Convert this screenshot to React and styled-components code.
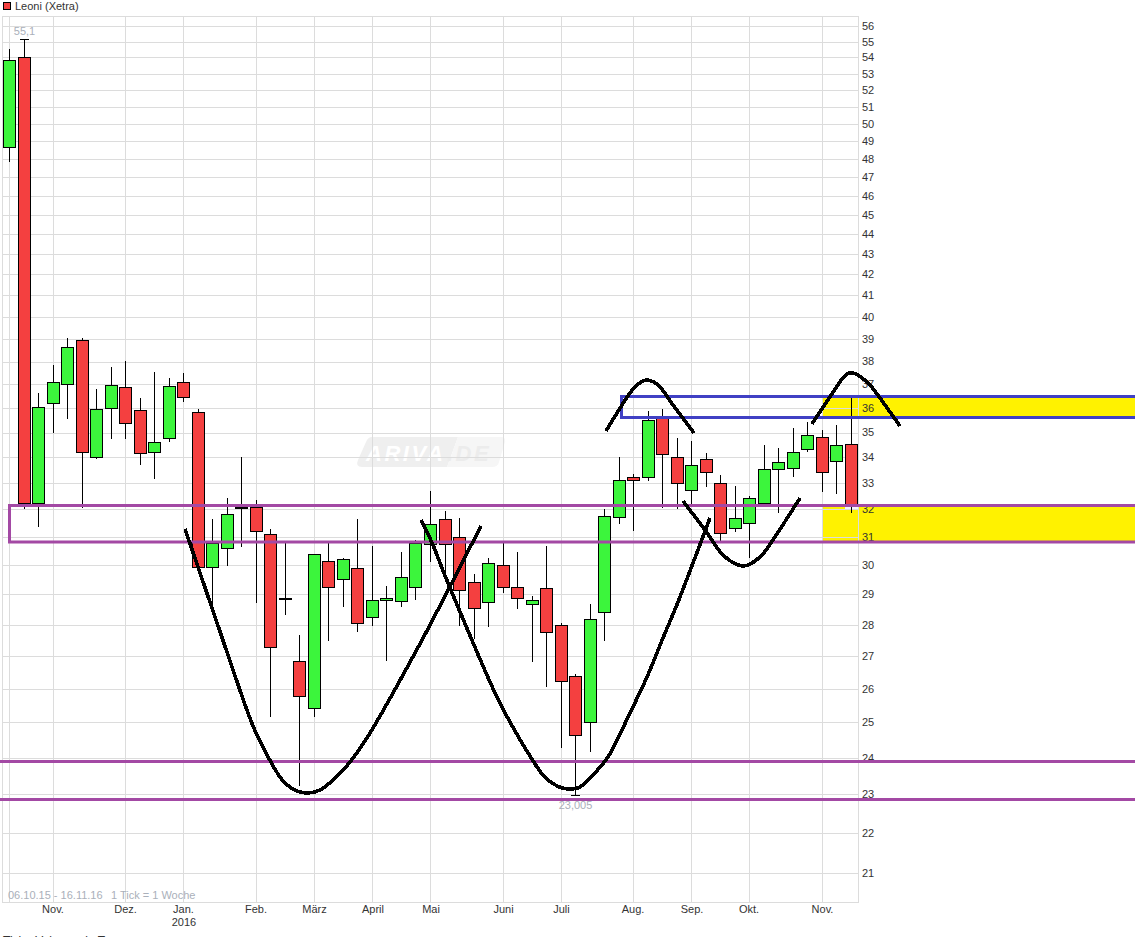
import React from 'react';
import styled, { createGlobalStyle } from 'styled-components';

const GlobalStyle = createGlobalStyle`
  html, body {
    margin: 0;
    padding: 0;
    background: #fff;
    overflow: hidden;
  }
  body {
    font-family: "Liberation Sans", Arial, sans-serif;
  }
`;

const Page = styled.div`
  display: flex;
  flex-direction: column;
  width: 1135px;
  height: 937px;
  overflow: hidden;
  background: #fff;
`;

const Legend = styled.div`
  display: flex;
  align-items: center;
  gap: 4px;
  height: 14px;
  padding: 0 0 2px 3px;
  box-sizing: border-box;
  font-size: 11px;
  color: #333;
`;

const LegendSwatch = styled.span`
  width: 6px;
  height: 6px;
  background: #f44040;
  border: 1px solid #000;
`;

const Chart = styled.svg`
  display: block;
  flex: none;
`;

const Footer = styled.div`
  flex: none;
  padding-left: 3px;
  font-size: 12px;
  line-height: 14px;
  color: #333;
`;

const GridLine = styled.line`
  stroke: #dcdcdc;
  stroke-width: 1;
`;

const Band = styled.rect`
  fill: #fff200;
`;

const AxisLabel = styled.text`
  font-family: "Liberation Sans", Arial, sans-serif;
  font-size: 11px;
  fill: #333;
`;

const Note = styled.text`
  font-family: "Liberation Sans", Arial, sans-serif;
  font-size: 11px;
  fill: #aab0ba;
`;

const Wick = styled.line`
  stroke: #000;
  stroke-width: ${(p) => p.$w || 1};
`;

const CandleBody = styled.rect`
  fill: ${(p) => (p.$up ? '#3cf53c' : '#f44040')};
  stroke: #000;
  stroke-width: 1;
`;

const Frame = styled.path`
  fill: none;
  stroke: ${(p) => p.$color};
  stroke-width: 3;
`;

const Curve = styled.path`
  fill: none;
  stroke: #000;
  stroke-width: 3.6;
  shape-rendering: crispEdges;
`;

const WatermarkText = styled.text`
  font-family: "Liberation Sans", Arial, sans-serif;
  font-size: 22px;
  font-weight: bold;
  font-style: italic;
  letter-spacing: 2.5px;
  fill: ${(p) => p.$fill};
`;

const hLines = [16, 26, 42, 57, 74, 90, 107, 124, 141, 159, 177, 196, 215, 234, 254, 274, 295, 317, 339, 362, 384, 408, 433, 457, 483, 509, 537, 565, 594, 625, 656, 689, 722, 758, 794, 833, 873, 902];
const vLines = [2, 9, 53, 125, 183, 256, 314, 372, 430, 503, 561, 633, 691, 749, 822, 858];

const priceLabels = [
  [56, 26], [55, 42], [54, 57], [53, 74], [52, 90], [51, 107], [50, 124], [49, 141], [48, 159],
  [47, 177], [46, 196], [45, 215], [44, 234], [43, 254], [42, 274], [41, 295], [40, 317], [39, 339],
  [38, 361], [37, 384], [36, 408], [35, 432], [34, 457], [33, 483], [32, 509], [31, 537], [30, 565],
  [29, 594], [28, 625], [27, 656], [26, 689], [25, 722], [24, 758], [23, 794], [22, 833], [21, 873],
];

const monthLabels = [
  ['Nov.', 53], ['Dez.', 125.5], ['Jan.', 183.5], ['Feb.', 256], ['März', 314.5], ['April', 373],
  ['Mai', 431], ['Juni', 503.5], ['Juli', 561.5], ['Aug.', 633], ['Sep.', 692], ['Okt.', 749], ['Nov.', 822.5],
];

// high, low, top of body, bottom of body, up (green)
const candles = [
  [49, 162, 60, 147, 1], [39, 509, 57, 503, 0], [393, 527, 407, 503, 1], [365, 433, 382, 403, 1],
  [338, 419, 347, 384, 1], [338, 508, 340, 452, 0], [389, 459, 409, 457, 1], [367, 439, 385, 408, 1],
  [361, 439, 387, 423, 0], [398, 465, 410, 453, 0], [372, 479, 442, 452, 1], [378, 442, 386, 438, 1],
  [373, 402, 382, 397, 0], [409, 567, 412, 567, 0], [519, 605, 543, 567, 1], [498, 566, 514, 548, 1],
  [457, 547, 507, 508, 1], [500, 603, 507, 531, 0], [529, 717, 534, 647, 0], [543, 615, 599, 599, 2],
  [635, 786, 661, 696, 0], [554, 717, 554, 708, 1], [543, 641, 561, 587, 0], [558, 607, 559, 579, 1],
  [519, 632, 568, 623, 0], [546, 626, 600, 617, 1], [586, 661, 598, 600, 1], [552, 607, 577, 601, 1],
  [540, 600, 543, 587, 1], [491, 562, 524, 544, 1], [511, 572, 519, 544, 0], [518, 626, 537, 590, 0],
  [574, 639, 582, 608, 0], [558, 627, 563, 602, 1], [543, 593, 565, 587, 0], [552, 609, 587, 598, 0],
  [596, 662, 600, 604, 1], [546, 687, 588, 632, 0], [623, 748, 625, 681, 0], [674, 795, 676, 735, 0],
  [604, 752, 619, 722, 1], [509, 641, 516, 612, 1], [457, 524, 480, 517, 1], [474, 531, 477, 480, 0],
  [411, 481, 420, 477, 1], [409, 508, 418, 454, 0], [438, 509, 457, 483, 0], [441, 505, 465, 490, 1],
  [453, 487, 459, 472, 0], [475, 541, 483, 533, 0], [486, 532, 518, 528, 1], [496, 558, 498, 523, 1],
  [445, 504, 469, 503, 1], [448, 513, 462, 469, 1], [428, 477, 452, 468, 1], [422, 452, 435, 449, 1],
  [430, 492, 437, 472, 0], [425, 494, 445, 461, 1], [398, 513, 444, 505, 0],
];

const candleX = (i) => Math.round(9 + i * 14.517) + 0.5;

const curves = [
  [[185, 529], [212, 608], [248, 713], [263, 747], [280, 777], [293, 789], [307, 793], [320, 790], [333, 780], [350, 762], [370, 733], [393, 693], [430, 625], [481, 526]],
  [[421, 520], [433, 545], [448, 583], [490, 682], [510, 722], [530, 756], [543, 775], [557, 786], [568, 789], [580, 787], [593, 775], [608, 757], [618, 738], [630, 713], [647, 677], [663, 638], [680, 597], [710, 518]],
  [[606, 431], [622, 405], [634, 388], [647, 380], [660, 387], [673, 405], [694, 433]],
  [[683, 501], [705, 530], [723, 555], [743, 566], [760, 557], [773, 540], [800, 498]],
  [[812, 424], [830, 397], [843, 378], [853, 373], [868, 383], [880, 398], [900, 426]],
];

// catmull-rom through the picked points
const smooth = (pts) => {
  let d = `M${pts[0][0]} ${pts[0][1]}`;
  for (let i = 0; i < pts.length - 1; i++) {
    const p0 = pts[i - 1] || pts[i];
    const p1 = pts[i];
    const p2 = pts[i + 1];
    const p3 = pts[i + 2] || p2;
    const c1x = p1[0] + (p2[0] - p0[0]) / 6;
    const c1y = p1[1] + (p2[1] - p0[1]) / 6;
    const c2x = p2[0] - (p3[0] - p1[0]) / 6;
    const c2y = p2[1] - (p3[1] - p1[1]) / 6;
    d += ` C${c1x} ${c1y} ${c2x} ${c2y} ${p2[0]} ${p2[1]}`;
  }
  return d;
};

const Candle = ({ data, index }) => {
  const [high, low, top, bottom, kind] = data;
  const x = candleX(index);
  if (kind === 2) {
    return (
      <g>
        <Wick x1={x} x2={x} y1={high} y2={low} />
        <Wick x1={x - 6.5} x2={x + 6.5} y1={top} y2={top} $w={2} />
      </g>
    );
  }
  return (
    <g>
      <Wick x1={x} x2={x} y1={high} y2={low} />
      <CandleBody x={x - 6} y={top + 0.5} width={12} height={bottom - top} $up={kind === 1} />
    </g>
  );
};

const Watermark = () => (
  <g>
    <path d="M372 437 H458 L447 467 H362 Q355 467 358 460 L366 442 Q368 437 372 437 Z" fill="#efefef" />
    <path d="M458 437 H501 Q506 437 505 442 L499 462 Q498 467 492 467 H447 Z" fill="#f6f6f6" />
    <WatermarkText x="366" y="461" $fill="#fff">ARIVA</WatermarkText>
    <WatermarkText x="447" y="461" $fill="#ececec">.DE</WatermarkText>
  </g>
);

export default function App() {
  return (
    <Page>
      <GlobalStyle />
      <Legend>
        <LegendSwatch />
        <span>Leoni (Xetra)</span>
      </Legend>
      <Chart width="1135" height="920" viewBox="0 14 1135 920">
        <Band x="823" y="397" width="312" height="20" />
        <Band x="823" y="507" width="312" height="34" />
        <rect x="845" y="507" width="13" height="2" fill="#f6f2ff" />
        <Watermark />
        {hLines.map((y) => (
          <GridLine key={y} x1="2" x2="859" y1={y + 0.5} y2={y + 0.5} />
        ))}
        {vLines.map((x) => (
          <GridLine key={x} x1={x + 0.5} x2={x + 0.5} y1="16" y2="903" />
        ))}
        {priceLabels.map(([p, y]) => (
          <AxisLabel key={p} x="862" y={y + 4}>{p}</AxisLabel>
        ))}
        {monthLabels.map(([m, x], i) => (
          <AxisLabel key={i} x={x} y="913" textAnchor="middle">{m}</AxisLabel>
        ))}
        <AxisLabel x="184" y="926" textAnchor="middle">2016</AxisLabel>
        <Note x="8" y="899">06.10.15 - 16.11.16</Note>
        <Note x="111" y="899">1 Tick = 1 Woche</Note>
        <Note x="24.5" y="35" textAnchor="middle">55,1</Note>
        <Note x="575.5" y="809" textAnchor="middle">23,005</Note>
        {candles.map((c, i) => (
          <Candle key={i} data={c} index={i} />
        ))}
        <Wick x1="20" x2="29" y1="39.5" y2="39.5" />
        <Wick x1="571" x2="580" y1="795.5" y2="795.5" />
        <Frame $color="#4040c4" d="M1135 396.5 H621.5 V417.5 H1135" />
        <Frame $color="#a349a4" d="M1135 505.5 H9.5 V542 H1135" />
        <Frame $color="#a349a4" d="M0 761.5 H1135" />
        <Frame $color="#a349a4" d="M0 799.5 H1135" />
        {curves.map((pts, i) => (
          <Curve key={i} d={smooth(pts)} />
        ))}
      </Chart>
      <Footer>Tick - Volumen in T</Footer>
    </Page>
  );
}
